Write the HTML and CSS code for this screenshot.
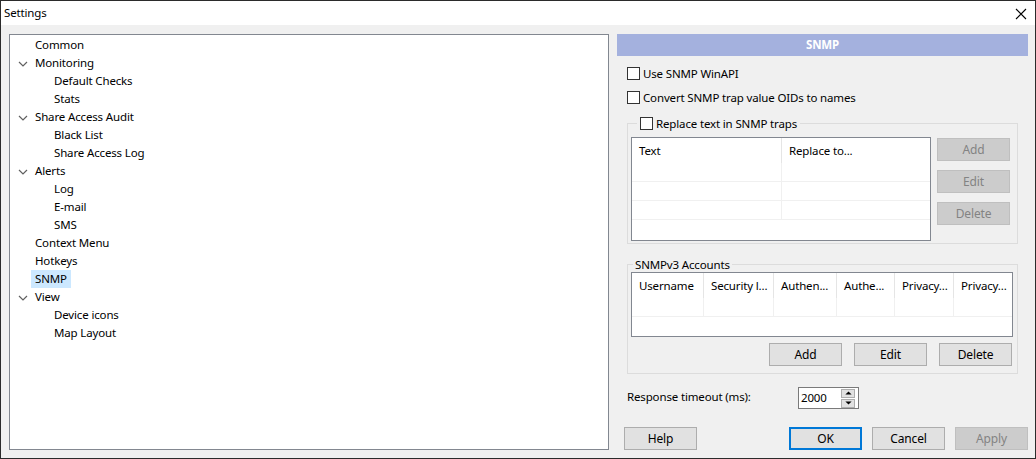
FILE: index.html
```html
<!DOCTYPE html>
<html>
<head>
<meta charset="utf-8">
<link rel="stylesheet" href="styles.css">
</head>
<body>
<div class="window">
  <div class="titlebar">
    <span class="title">Settings</span>
    <svg class="close" width="12" height="12" viewBox="0 0 12 12"><path d="M1 1L11 11M11 1L1 11" stroke="#000" stroke-width="1.1" fill="none"/></svg>
  </div>
  <div class="content">
    <div class="tree">
      <div class="node l0"><span class="twisty"></span><span class="lbl">Common</span></div>
      <div class="node l0"><span class="twisty"><svg width="10" height="6" viewBox="0 0 10 6"><path d="M1 1L5 5L9 1" stroke="#606060" stroke-width="1.2" fill="none"/></svg></span><span class="lbl">Monitoring</span></div>
      <div class="node l1"><span class="lbl">Default Checks</span></div>
      <div class="node l1"><span class="lbl">Stats</span></div>
      <div class="node l0"><span class="twisty"><svg width="10" height="6" viewBox="0 0 10 6"><path d="M1 1L5 5L9 1" stroke="#606060" stroke-width="1.2" fill="none"/></svg></span><span class="lbl">Share Access Audit</span></div>
      <div class="node l1"><span class="lbl">Black List</span></div>
      <div class="node l1"><span class="lbl">Share Access Log</span></div>
      <div class="node l0"><span class="twisty"><svg width="10" height="6" viewBox="0 0 10 6"><path d="M1 1L5 5L9 1" stroke="#606060" stroke-width="1.2" fill="none"/></svg></span><span class="lbl">Alerts</span></div>
      <div class="node l1"><span class="lbl">Log</span></div>
      <div class="node l1"><span class="lbl">E-mail</span></div>
      <div class="node l1"><span class="lbl">SMS</span></div>
      <div class="node l0"><span class="twisty"></span><span class="lbl">Context Menu</span></div>
      <div class="node l0"><span class="twisty"></span><span class="lbl">Hotkeys</span></div>
      <div class="node l0"><span class="twisty"></span><span class="lbl selected">SNMP</span></div>
      <div class="node l0"><span class="twisty"><svg width="10" height="6" viewBox="0 0 10 6"><path d="M1 1L5 5L9 1" stroke="#606060" stroke-width="1.2" fill="none"/></svg></span><span class="lbl">View</span></div>
      <div class="node l1"><span class="lbl">Device icons</span></div>
      <div class="node l1"><span class="lbl">Map Layout</span></div>
    </div>
    <div class="panel">
      <div class="panel-header">SNMP</div>
      <label class="check row1"><span class="box"></span><span>Use SNMP WinAPI</span></label>
      <label class="check row2"><span class="box"></span><span>Convert SNMP trap value OIDs to names</span></label>
      <fieldset class="group group1">
        <legend class="legend-check"><label class="check"><span class="box"></span><span>Replace text in SNMP traps</span></label></legend>
        <div class="group1-body">
          <div class="list list1">
            <div class="lrow lhead">
              <div class="cell c-text">Text</div>
              <div class="cell c-repl">Replace to...</div>
            </div>
            <div class="lrow"><div class="cell c-text"></div><div class="cell c-repl"></div></div>
            <div class="lrow"><div class="cell c-text"></div><div class="cell c-repl"></div></div>
            <div class="lrow"><div class="cell c-text"></div><div class="cell c-repl"></div></div>
          </div>
          <div class="side-buttons">
            <button class="btn disabled">Add</button>
            <button class="btn disabled">Edit</button>
            <button class="btn disabled">Delete</button>
          </div>
        </div>
      </fieldset>
      <fieldset class="group group2">
        <legend class="legend-text">SNMPv3 Accounts</legend>
        <div class="list list2">
          <div class="lrow lhead">
            <div class="cell a1">Username</div>
            <div class="cell a2">Security l...</div>
            <div class="cell a3">Authen...</div>
            <div class="cell a4">Authe...</div>
            <div class="cell a5">Privacy...</div>
            <div class="cell a6">Privacy...</div>
          </div>
          <div class="lrow">
            <div class="cell a1"></div><div class="cell a2"></div><div class="cell a3"></div><div class="cell a4"></div><div class="cell a5"></div><div class="cell a6"></div>
          </div>
        </div>
        <div class="acct-buttons">
          <button class="btn">Add</button>
          <button class="btn">Edit</button>
          <button class="btn">Delete</button>
        </div>
      </fieldset>
      <div class="timeout-row">
        <span class="timeout-label">Response timeout (ms):</span>
        <div class="spin">
          <span class="spin-value">2000</span>
          <div class="spin-btns">
            <span class="spin-btn"><svg width="9" height="5" viewBox="0 0 9 5"><path d="M0.5 4.5L4.5 0.5L8.5 4.5Z" fill="#000"/></svg></span>
            <span class="spin-btn"><svg width="9" height="5" viewBox="0 0 9 5"><path d="M0.5 0.5L4.5 4.5L8.5 0.5Z" fill="#000"/></svg></span>
          </div>
        </div>
      </div>
      <div class="dialog-buttons">
        <button class="btn">Help</button>
        <span class="spacer"></span>
        <button class="btn default">OK</button>
        <button class="btn">Cancel</button>
        <button class="btn disabled">Apply</button>
      </div>
    </div>
  </div>
</div>
</body>
</html>
```

FILE: styles.css
```css
* { box-sizing: border-box; }
html, body { margin: 0; padding: 0; }
body {
  width: 1036px;
  height: 459px;
  overflow: hidden;
  font-family: "Noto Sans", "Open Sans", sans-serif;
  font-size: 11.5px;
  letter-spacing: -0.15px;
  color: #000;
  background: #f0f0f0;
}
.window {
  width: 1036px;
  height: 459px;
  border: 1px solid #2b2b2b;
  display: flex;
  flex-direction: column;
  background: #f0f0f0;
}
.titlebar {
  height: 24px;
  background: #fff;
  display: flex;
  align-items: center;
  padding-left: 3px;
  padding-right: 8px;
  flex-shrink: 0;
}
.title { flex: 1; line-height: 16px; }
.close { display: block; margin-top: 1px; }

.content {
  flex: 1;
  display: flex;
  padding: 9px 7px 8px 8px;
  gap: 8px;
}
.tree {
  width: 600px;
  height: 416px;
  flex-shrink: 0;
  background: #fff;
  border: 1px solid #828790;
  padding-top: 1px;
}
.node {
  height: 18px;
  display: flex;
  align-items: center;
  line-height: 16px;
}
.node.l0 { padding-left: 8px; }
.node.l1 { padding-left: 44px; }
.twisty {
  width: 10px;
  height: 18px;
  display: flex;
  align-items: center;
  justify-content: center;
  margin-right: 7px;
}
.twisty svg { display: block; margin-top: 1px; }
.lbl { padding: 1px 0 1px 0; }
.lbl.selected {
  background: #cce8ff;
  padding: 1px 4px;
  margin-left: -4px;
}

.panel {
  width: 411px;
  flex-shrink: 0;
  display: flex;
  flex-direction: column;
}
.panel-header {
  height: 22px;
  background: #a4b1de;
  color: #fff;
  font-weight: bold;
  text-align: center;
  line-height: 22px;
}
.check {
  display: flex;
  align-items: center;
  height: 15px;
  line-height: 15px;
  white-space: nowrap;
}
.box {
  width: 13px;
  height: 13px;
  border: 1px solid #333;
  background: #fff;
  margin-right: 3px;
  flex-shrink: 0;
}
.row1 { margin: 10px 0 0 10px; }
.row2 { margin: 9px 0 0 10px; }

.group {
  margin: 0 0 0 10px;
  width: 391px;
  border: 1px solid #dcdcdc;
  min-width: 0;
}
.group1 {
  margin-top: 11px;
  padding: 6px 7px 2px 3px;
}
.legend-check {
  padding: 0 3px;
  margin-left: 6px;
  line-height: 15px;
}
.group1-body { display: flex; gap: 6px; }
.list {
  background: #fff;
  border: 1px solid #828790;
  overflow: hidden;
}
.list1 { width: 300px; height: 104px; }
.lrow {
  display: flex;
  height: 18px;
  border-bottom: 1px solid #f0f0f0;
  box-sizing: content-box;
}
.lrow.lhead {
  height: 25px;
  border-bottom: none;
  line-height: 25px;
}
.cell {
  flex-shrink: 0;
  border-right: 1px solid #f0f0f0;
  padding-left: 7px;
  white-space: nowrap;
  overflow: hidden;
}
.lhead .cell { border-right-color: #e5e5e5; }
.c-text { width: 150px; }
.c-repl { width: 149px; }

.side-buttons {
  display: flex;
  flex-direction: column;
  gap: 9px;
  padding-top: 1px;
}
.btn {
  font-family: inherit;
  font-size: 12px;
  letter-spacing: -0.15px;
  width: 73px;
  height: 23px;
  flex-shrink: 0;
  padding: 0;
  margin: 0;
  background: #e1e1e1;
  border: 1px solid #adadad;
  color: #000;
  line-height: 20px;
}
.btn.disabled {
  background: #cccccc;
  border-color: #bfbfbf;
  color: #838383;
}
.btn.default {
  border: 2px solid #0078d7;
}

.group2 {
  margin-top: 13px;
  padding: 0 4px 7px 3px;
}
.legend-text {
  padding: 0 2px;
  margin-left: 2px;
  line-height: 15px;
}
.list2 { width: 382px; height: 65px; }
.a1 { width: 72px; }
.a2 { width: 70px; }
.a3 { width: 63px; }
.a4 { width: 58px; }
.a5 { width: 59px; }
.a6 { width: 59px; }
.acct-buttons {
  display: flex;
  justify-content: flex-end;
  gap: 12px;
  margin-top: 6px;
  padding-right: 1px;
}

.timeout-row {
  display: flex;
  align-items: center;
  margin: 13px 0 0 10px;
  height: 22px;
}
.timeout-label { width: 171px; line-height: 16px; margin-top: -2px; }
.spin {
  width: 61px;
  height: 22px;
  border: 1px solid #7a7a7a;
  background: #fff;
  display: flex;
  align-items: center;
  padding-left: 2px;
}
.spin-value { flex: 1; line-height: 16px; }
.spin-btns {
  display: flex;
  flex-direction: column;
  gap: 1px;
  margin-right: 3px;
}
.spin-btn {
  width: 14px;
  height: 9px;
  background: #e1e1e1;
  border: 1px solid #adadad;
  display: flex;
  align-items: center;
  justify-content: center;
}
.spin-btn svg { display: block; width: 7px; height: 4px; }

.dialog-buttons {
  display: flex;
  gap: 10px;
  margin-top: 18px;
  padding-left: 7px;
}
.spacer { flex: 1; }
```
